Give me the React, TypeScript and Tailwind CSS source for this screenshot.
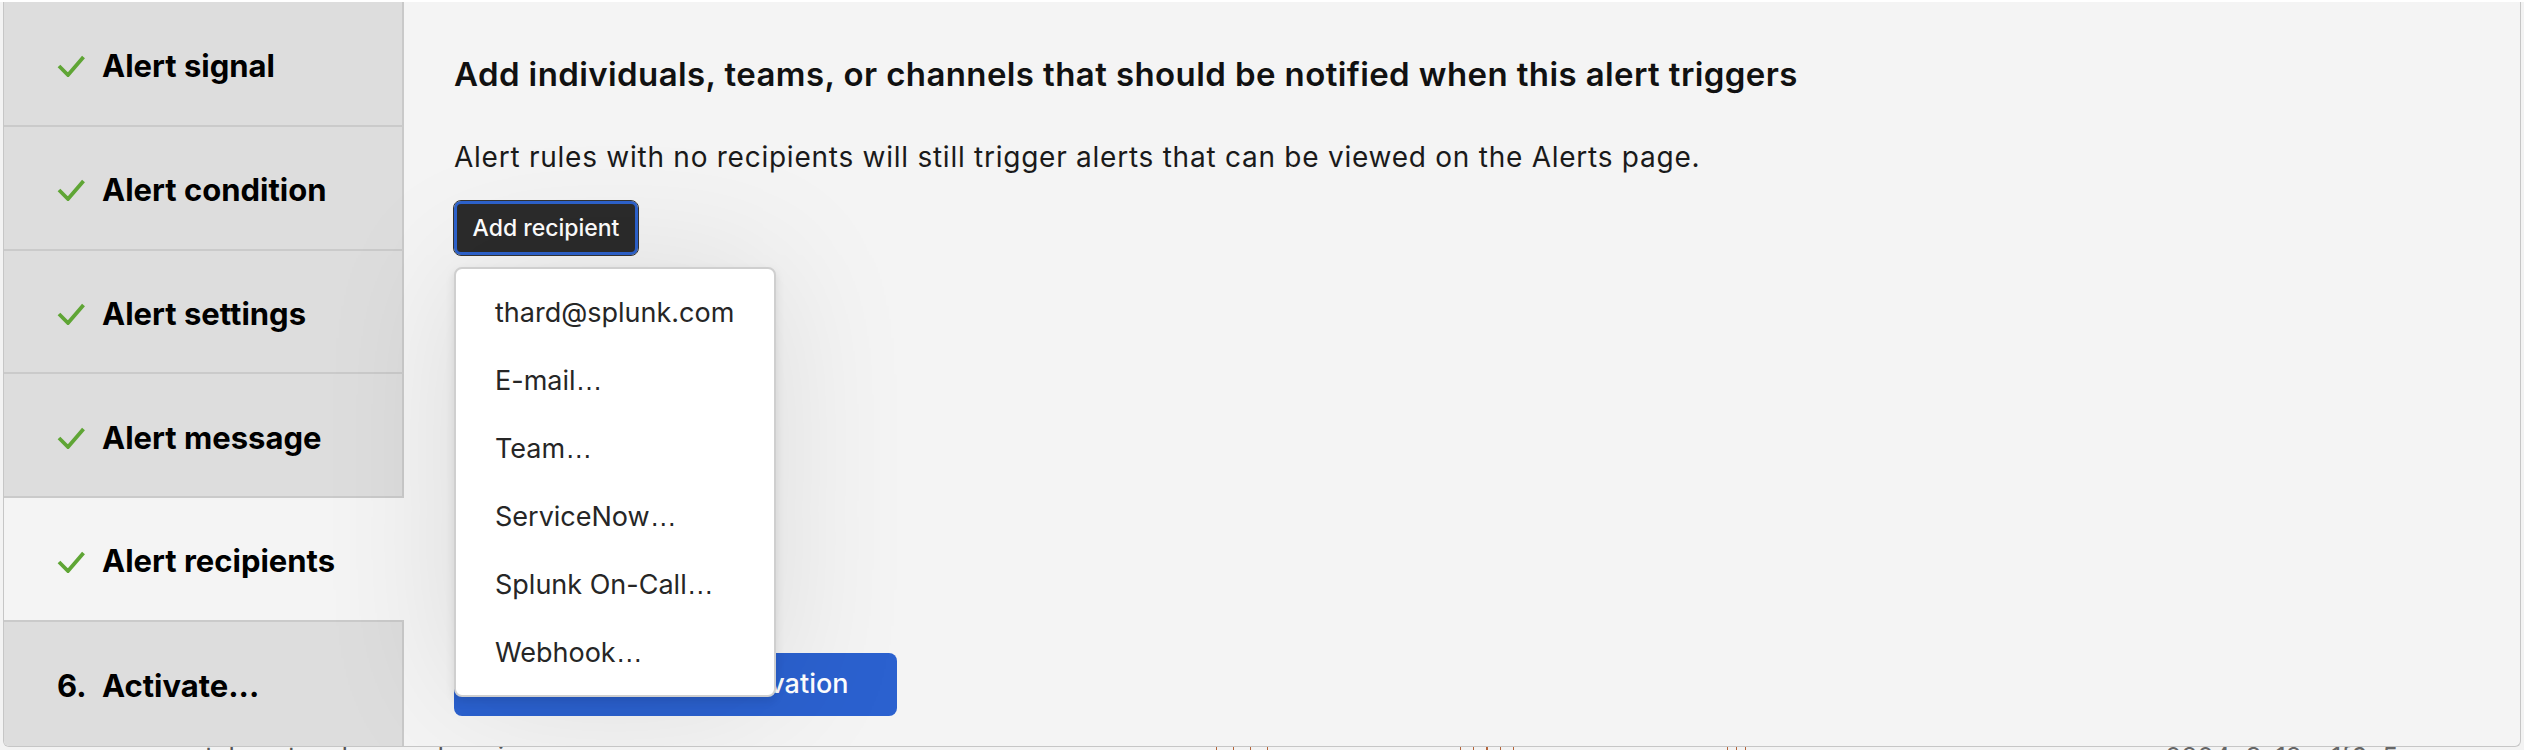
import React from "react";

const SANS = "Inter, 'Liberation Sans', 'Noto Sans', sans-serif";

function Check() {
  return (
    <svg width="28" height="22" viewBox="0 0 28 22" fill="none">
      <polyline
        points="2,11 11,20 26.5,2"
        stroke="#5fa535"
        strokeWidth="3.8"
        strokeLinecap="butt"
        strokeLinejoin="miter"
        fill="none"
      />
    </svg>
  );
}

function Ell() {
  return <span className="font-['Liberation_Sans',sans-serif]">…</span>;
}

const steps = [
  { label: "Alert signal", done: true },
  { label: "Alert condition", done: true },
  { label: "Alert settings", done: true },
  { label: "Alert message", done: true },
  { label: "Alert recipients", done: true, active: true },
  { label: "Activate...", num: "6." },
];

const items = [
  "thard@splunk.com",
  "E-mail",
  "Team",
  "ServiceNow",
  "Splunk On-Call",
  "Webhook",
];

export default function App() {
  return (
    <div
      className="relative w-[2524px] h-[750px] overflow-hidden bg-[#f3f3f3]"
      style={{ fontFamily: SANS }}
    >
      {/* background page peeking out */}
      <div className="absolute inset-0">
        <div className="h-[2px] bg-white" />
        <div className="absolute left-[143px] top-[742px] text-[26px] leading-[30px] text-[#555]">
          opentelemetry-demo-adservice
        </div>
        <div className="absolute left-[2165px] top-[742px] text-[26px] leading-[30px] text-[#666]">
          0204e3a12ce1f6e5
        </div>
        <div className="absolute left-[1216px] top-[746px] flex gap-[16px]">
          <div className="w-[1px] h-[4px] bg-[#b5643a]" />
          <div className="w-[1px] h-[4px] bg-[#b5643a]" />
          <div className="w-[1px] h-[4px] bg-[#b5643a]" />
          <div className="w-[1px] h-[4px] bg-[#b5643a]" />
        </div>
        <div className="absolute left-[1460px] top-[746px] flex gap-[12px]">
          <div className="w-[1px] h-[4px] bg-[#b5643a]" />
          <div className="w-[1px] h-[4px] bg-[#b5643a]" />
          <div className="w-[2px] h-[4px] bg-[#b5643a]" />
          <div className="w-[1px] h-[4px] bg-[#b5643a]" />
          <div className="w-[1px] h-[4px] bg-[#b5643a]" />
        </div>
        <div className="absolute left-[1727px] top-[746px] flex gap-[8px]">
          <div className="w-[1px] h-[4px] bg-[#b5643a]" />
          <div className="w-[1px] h-[4px] bg-[#b5643a]" />
          <div className="w-[1px] h-[4px] bg-[#b5643a]" />
        </div>
      </div>

      {/* modal */}
      <div className="absolute left-[3px] top-[2px] w-[2518px] h-[745px] flex bg-[#f4f4f4] border-x border-b border-[#c6c6c6] rounded-b-[6px] overflow-hidden">
        {/* sidebar */}
        <nav className="w-[400px] flex flex-col shrink-0">
          {steps.map((s, i) => (
            <div
              key={s.label}
              className={
                "flex items-center pl-[53px] pt-[5px] " +
                (i === 0 ? "h-[125px] " : "h-[124px] ") +
                (i < steps.length - 1 ? "border-b-2 border-b-[#cacaca] " : "") +
                (s.active
                  ? "bg-[#f4f4f4]"
                  : "bg-[#dddddd] border-r-2 border-r-[#c9c9c9]")
              }
            >
              <div className="w-[45px] flex items-center">
                {s.done ? (
                  <Check />
                ) : (
                  <span className="text-[31px] font-bold text-black">{s.num}</span>
                )}
              </div>
              <span className="text-[31px] font-bold text-black">
                {s.label}
              </span>
            </div>
          ))}
        </nav>

        {/* main content */}
        <main className="flex-1 flex flex-col pl-[50px] pt-[52px] pb-[30px]">
          <h2 className="text-[33px] leading-[40px] font-semibold text-[#111] tracking-[0.4px]">
            Add individuals, teams, or channels that should be notified when this alert triggers
          </h2>
          <p className="mt-[47px] text-[28px] leading-[32px] text-[#1a1a1a] tracking-[0.75px]">
            Alert rules with no recipients will still trigger alerts that can be viewed on the Alerts page.
          </p>
          <div className="relative mt-[28px] self-start">
            <button className="w-[184px] h-[54px] flex items-center justify-center rounded-[7px] bg-[#2b2b2b] border-[3px] border-[#2d62cc] outline outline-1 outline-[#333] text-[23px] font-medium text-white">
              Add recipient
            </button>
            <div className="absolute left-0 top-[66px] w-[322px] h-[430px] z-10 bg-white border-2 border-[#cfcfcf] rounded-[8px] py-[10px] shadow-[0_4px_10px_rgba(0,0,0,0.10),0_0_140px_rgba(0,0,0,0.10)]">
              {items.map((t, i) => (
                <div
                  key={t}
                  className="h-[68px] flex items-center pl-[39px] text-[27px] text-[#262626]"
                >
                  {t}
                  {i > 0 && <Ell />}
                </div>
              ))}
            </div>
          </div>
          <div className="mt-auto">
            <button className="w-[443px] h-[63px] rounded-[8px] bg-[#2b61cf] text-white text-[27px] font-medium flex items-center justify-center">
              Proceed to Alert Activation
            </button>
          </div>
        </main>
      </div>
    </div>
  );
}
